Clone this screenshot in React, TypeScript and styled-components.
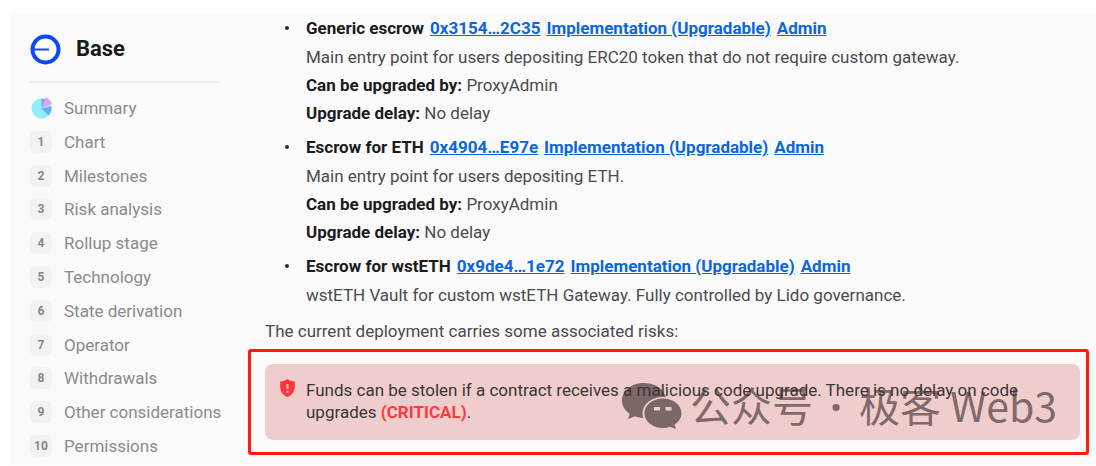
import React from "react";
import styled, { createGlobalStyle } from "styled-components";

const GlobalStyle = createGlobalStyle`
  *, *::before, *::after { box-sizing: border-box; }
  body {
    margin: 0;
    background: #ffffff;
    color: #4b4b4d;
    font-family: Roboto, "Liberation Sans", sans-serif;
    font-size: 17px;
    line-height: 28px;
  }
`;

const Page = styled.div`
  padding: 13px 0 1px 11px;
`;

const Panel = styled.div`
  display: grid;
  grid-template-columns: 190px minmax(0, 1fr);
  column-gap: 28px;
  padding-left: 19px;
  background: #fafafa;
`;

const Sidebar = styled.aside`
  display: flex;
  flex-direction: column;
  padding: 20px 0 8px;
`;

const Project = styled.header`
  display: flex;
  align-items: center;
  gap: 14px;
  height: 32px;
`;

const ProjectName = styled.h1`
  margin: 0;
  font-size: 22px;
  font-weight: 700;
  color: #1b1b1d;
`;

const Divider = styled.hr`
  width: 100%;
  margin: 16px 0 14px;
  border: 0;
  border-top: 2px solid #ededed;
`;

const NavList = styled.ol`
  flex: 1;
  display: flex;
  flex-direction: column;
  justify-content: space-between;
  margin: 0;
  padding: 0;
  list-style: none;
`;

const NavLink = styled.a`
  display: flex;
  align-items: center;
  gap: 12px;
  height: 22px;
  color: #8b8b8d;
  white-space: nowrap;
  text-decoration: none;
`;

const Badge = styled.span`
  flex: none;
  width: 22px;
  height: 22px;
  border-radius: 6px;
  background: #f2f2f2;
  color: #868688;
  font-size: 12px;
  font-weight: 700;
  line-height: 22px;
  text-align: center;
`;

const Main = styled.main`
  padding: 1px 7px 10px 0;
`;

const Contracts = styled.ul`
  display: flex;
  flex-direction: column;
  gap: 6px;
  margin: 0;
  padding: 0 17px;
  list-style: none;
`;

const Contract = styled.li`
  display: grid;
  grid-template-columns: 41px minmax(0, 1fr);
`;

const Bullet = styled.span`
  width: 4px;
  height: 4px;
  margin: 12px 0 0 20px;
  border-radius: 50%;
  background: #2b2b2d;
`;

const ContractTitle = styled.h2`
  display: flex;
  flex-wrap: wrap;
  column-gap: 6px;
  margin: 0 0 1px;
  font-size: 17px;
  font-weight: 700;
  color: #1b1b1d;
`;

const ContractLink = styled.a`
  color: #0c66dd;
  text-decoration: underline;
`;

const Description = styled.p`
  margin: 0;
`;

const Field = styled.p`
  margin: 0;
`;

const FieldName = styled.strong`
  font-weight: 700;
  color: #1b1b1d;
`;

const RisksIntro = styled.p`
  margin: 8px 17px 4px;
`;

const Highlight = styled.section`
  padding: 12px 6px 12px 14px;
  border: 3px solid #fc1b12;
  border-radius: 3px;
`;

const RiskCard = styled.div`
  position: relative;
  display: grid;
  grid-template-columns: 15px minmax(0, 1fr);
  column-gap: 11px;
  padding: 15px 15px 17px;
  border-radius: 8px;
  background: #f0cdcd;
`;

const RiskText = styled.p`
  margin: 0;
  line-height: 22px;
  color: #3a3537;
`;

const Critical = styled.strong`
  font-weight: 700;
  color: #fb3a3f;
`;

const Watermark = styled.div`
  position: absolute;
  top: 19px;
  right: 23px;
  display: flex;
  align-items: flex-start;
  gap: 8px;
  color: rgba(68, 54, 54, 0.68);
  font-family: "Noto Sans CJK SC", sans-serif;
  font-size: 41px;
  line-height: 42px;
  white-space: nowrap;
  pointer-events: none;
`;

const MiddleDot = styled.span`
  padding: 0 8px;
  font-family: "Noto Sans", sans-serif;
  font-weight: 700;
`;

const BaseLogo = () => (
  <svg width="32" height="32" viewBox="0 0 32 32" aria-hidden="true">
    <circle cx="15.5" cy="16.5" r="13" fill="#fff" stroke="#0b47ff" strokeWidth="4" />
    <path d="M4 16.5H19" stroke="#0b47ff" strokeWidth="2" />
  </svg>
);

const SummaryIcon = () => (
  <svg width="22" height="22" viewBox="0 0 22 22" aria-hidden="true">
    <circle cx="11.5" cy="11.5" r="10" fill="#93ecfd" />
    <path d="M11.5 11.5V1.5A10 10 0 0 1 16 2.5Z" fill="#5eb3ee" />
    <path d="M11.5 11.5L21.4 9.5A10 10 0 0 1 18.6 18.6Z" fill="#5eb3ee" />
    <path d="M11.8 10.8L15.6 0.6A11 11 0 0 1 22 7Z" fill="#e79cf5" />
  </svg>
);

const ShieldIcon = () => (
  <svg width="15" height="18" viewBox="0 0 15 18" aria-hidden="true">
    <path
      d="M7.5 0C5.8 1.6 3.2 2.4 0.2 2.5V7.5C0.2 12.5 2.6 16 7.5 18C12.4 16 14.8 12.5 14.8 7.5V2.5C11.8 2.4 9.2 1.6 7.5 0Z"
      fill="#fb3539"
    />
    <path d="M7.5 5V10" stroke="#f6c3c4" strokeWidth="2" />
    <path d="M7.5 11.8V13.8" stroke="#f6c3c4" strokeWidth="2" />
  </svg>
);

const ChatIcon = () => (
  <svg width="60" height="46" viewBox="0 0 60 46" aria-hidden="true">
    <path
      d="M22 0C9.8 0 0 7.8 0 17.6C0 23 3 27.6 7.6 30.9L6 36L13 33.2C15.6 34.2 18.5 34.9 21.4 35C20.8 33.5 20.5 32 20.5 30.4C20.5 21.2 29.5 14 41 14C42 14 43 14.1 43.9 14.2C41.7 6 32.8 0 22 0Z"
      fill="currentColor"
    />
    <path
      fillRule="evenodd"
      d="M41 15.5C30.7 15.5 22.4 22.1 22.4 30.2C22.4 38.4 30.7 45 41 45C43.5 45 45.8 44.6 48 43.8L54 46L52.6 41.4C56.9 38.7 59.5 34.7 59.5 30.2C59.5 22.1 51.3 15.5 41 15.5ZM32 24H38V27.5H32ZM43.5 24H49.5V27.5H43.5Z"
      fill="currentColor"
    />
  </svg>
);

const sections = [
  "Summary",
  "Chart",
  "Milestones",
  "Risk analysis",
  "Rollup stage",
  "Technology",
  "State derivation",
  "Operator",
  "Withdrawals",
  "Other considerations",
  "Permissions",
];

const upgradeFields: [string, string][] = [
  ["Can be upgraded by:", "ProxyAdmin"],
  ["Upgrade delay:", "No delay"],
];

const contracts = [
  {
    name: "Generic escrow",
    address: "0x3154…2C35",
    description:
      "Main entry point for users depositing ERC20 token that do not require custom gateway.",
    fields: upgradeFields,
  },
  {
    name: "Escrow for ETH",
    address: "0x4904…E97e",
    description: "Main entry point for users depositing ETH.",
    fields: upgradeFields,
  },
  {
    name: "Escrow for wstETH",
    address: "0x9de4…1e72",
    description: "wstETH Vault for custom wstETH Gateway. Fully controlled by Lido governance.",
    fields: [] as [string, string][],
  },
];

export default function App() {
  return (
    <>
      <GlobalStyle />
      <Page>
        <Panel>
          <Sidebar>
            <Project>
              <BaseLogo />
              <ProjectName>Base</ProjectName>
            </Project>
            <Divider />
            <NavList>
              {sections.map((label, i) => (
                <li key={label}>
                  <NavLink href="#">
                    {i === 0 ? <SummaryIcon /> : <Badge>{i}</Badge>}
                    {label}
                  </NavLink>
                </li>
              ))}
            </NavList>
          </Sidebar>
          <Main>
            <Contracts>
              {contracts.map((c) => (
                <Contract key={c.address}>
                  <Bullet />
                  <div>
                    <ContractTitle>
                      <span>{c.name}</span>
                      <ContractLink href="#">{c.address}</ContractLink>
                      <ContractLink href="#">Implementation (Upgradable)</ContractLink>
                      <ContractLink href="#">Admin</ContractLink>
                    </ContractTitle>
                    <Description>{c.description}</Description>
                    {c.fields.map(([name, value]) => (
                      <Field key={name}>
                        <FieldName>{name}</FieldName> {value}
                      </Field>
                    ))}
                  </div>
                </Contract>
              ))}
            </Contracts>
            <RisksIntro>The current deployment carries some associated risks:</RisksIntro>
            <Highlight>
              <RiskCard>
                <ShieldIcon />
                <RiskText>
                  Funds can be stolen if a contract receives a malicious code upgrade. There is no
                  delay on code upgrades <Critical>(CRITICAL)</Critical>.
                </RiskText>
                <Watermark>
                  <ChatIcon />
                  <span>
                    公众号 <MiddleDot>·</MiddleDot> 极客 Web3
                  </span>
                </Watermark>
              </RiskCard>
            </Highlight>
          </Main>
        </Panel>
      </Page>
    </>
  );
}
